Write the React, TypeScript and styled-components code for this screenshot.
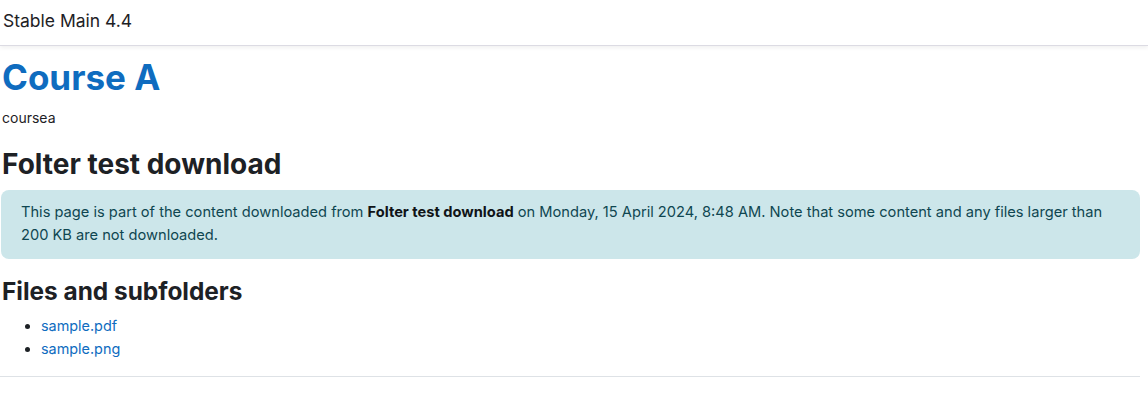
import React from "react";
import styled, { createGlobalStyle } from "styled-components";

const GlobalStyle = createGlobalStyle`
  html, body {
    margin: 0;
    padding: 0;
    background: #fff;
  }
  body {
    font-family: Inter, "Noto Sans", "Liberation Sans", sans-serif;
    font-size: 15px;
    color: #1d2125;
  }
`;

const files = ["sample.pdf", "sample.png"];

const App = () => {
  return (
    <>
      <GlobalStyle />
      <Header>Stable Main 4.4</Header>
      <Main>
        <CourseTitle href="#">Course A</CourseTitle>
        <ShortName>coursea</ShortName>
        <PageTitle>Folter test download</PageTitle>
        <Alert>
          This page is part of the content downloaded from{" "}
          <strong>Folter test download</strong> on Monday, 15 April 2024, 8:48
          AM. Note that some content and any files larger than 200 KB are not
          downloaded.
        </Alert>
        <SectionTitle>Files and subfolders</SectionTitle>
        <FileList>
          {files.map((f) => (
            <li key={f}>
              <FileLink href="#">{f}</FileLink>
            </li>
          ))}
        </FileList>
        <Rule />
      </Main>
    </>
  );
};

export default App;

const Header = styled.header`
  height: 46px;
  box-sizing: border-box;
  padding: 8px 3px 0;
  font-size: 17.5px;
  line-height: 25px;
  color: #1d2125;
  border-bottom: 1px solid #dcdbe3;
  box-shadow: 0 2px 4px rgba(0, 0, 0, 0.06);
`;

const Main = styled.main`
  padding: 10px 8px 0 0;
`;

const CourseTitle = styled.a`
  display: block;
  font-size: 35px;
  line-height: 42px;
  font-weight: 700;
  color: #0f6cbf;
  text-decoration: none;
  padding-left: 2px;
`;

const ShortName = styled.div`
  margin-top: 10px;
  font-size: 14px;
  line-height: 20px;
  padding-left: 2px;
`;

const PageTitle = styled.h2`
  margin: 18px 0 0;
  font-size: 28px;
  line-height: 36px;
  font-weight: 700;
  padding-left: 2px;
`;

const Alert = styled.div`
  margin-top: 8px;
  margin-left: 1px;
  padding: 11px 20px 12px;
  border-radius: 8px;
  background: #cce6ea;
  color: #0f4651;
  font-size: 14.65px;
  line-height: 23px;

  strong {
    color: #101417;
    font-weight: 700;
  }
`;

const SectionTitle = styled.h3`
  margin: 16px 0 0;
  font-size: 24.4px;
  line-height: 32px;
  font-weight: 700;
  padding-left: 2px;
`;

const FileList = styled.ul`
  margin: 7px 0 0;
  padding-left: 41px;
  font-size: 14.4px;
  line-height: 23px;

  li::marker {
    color: #1d2125;
  }
`;

const FileLink = styled.a`
  color: #0f6cbf;
  text-decoration: none;
`;

const Rule = styled.hr`
  margin: 16px 0 0;
  border: 0;
  border-top: 1px solid #dee2e6;
`;
